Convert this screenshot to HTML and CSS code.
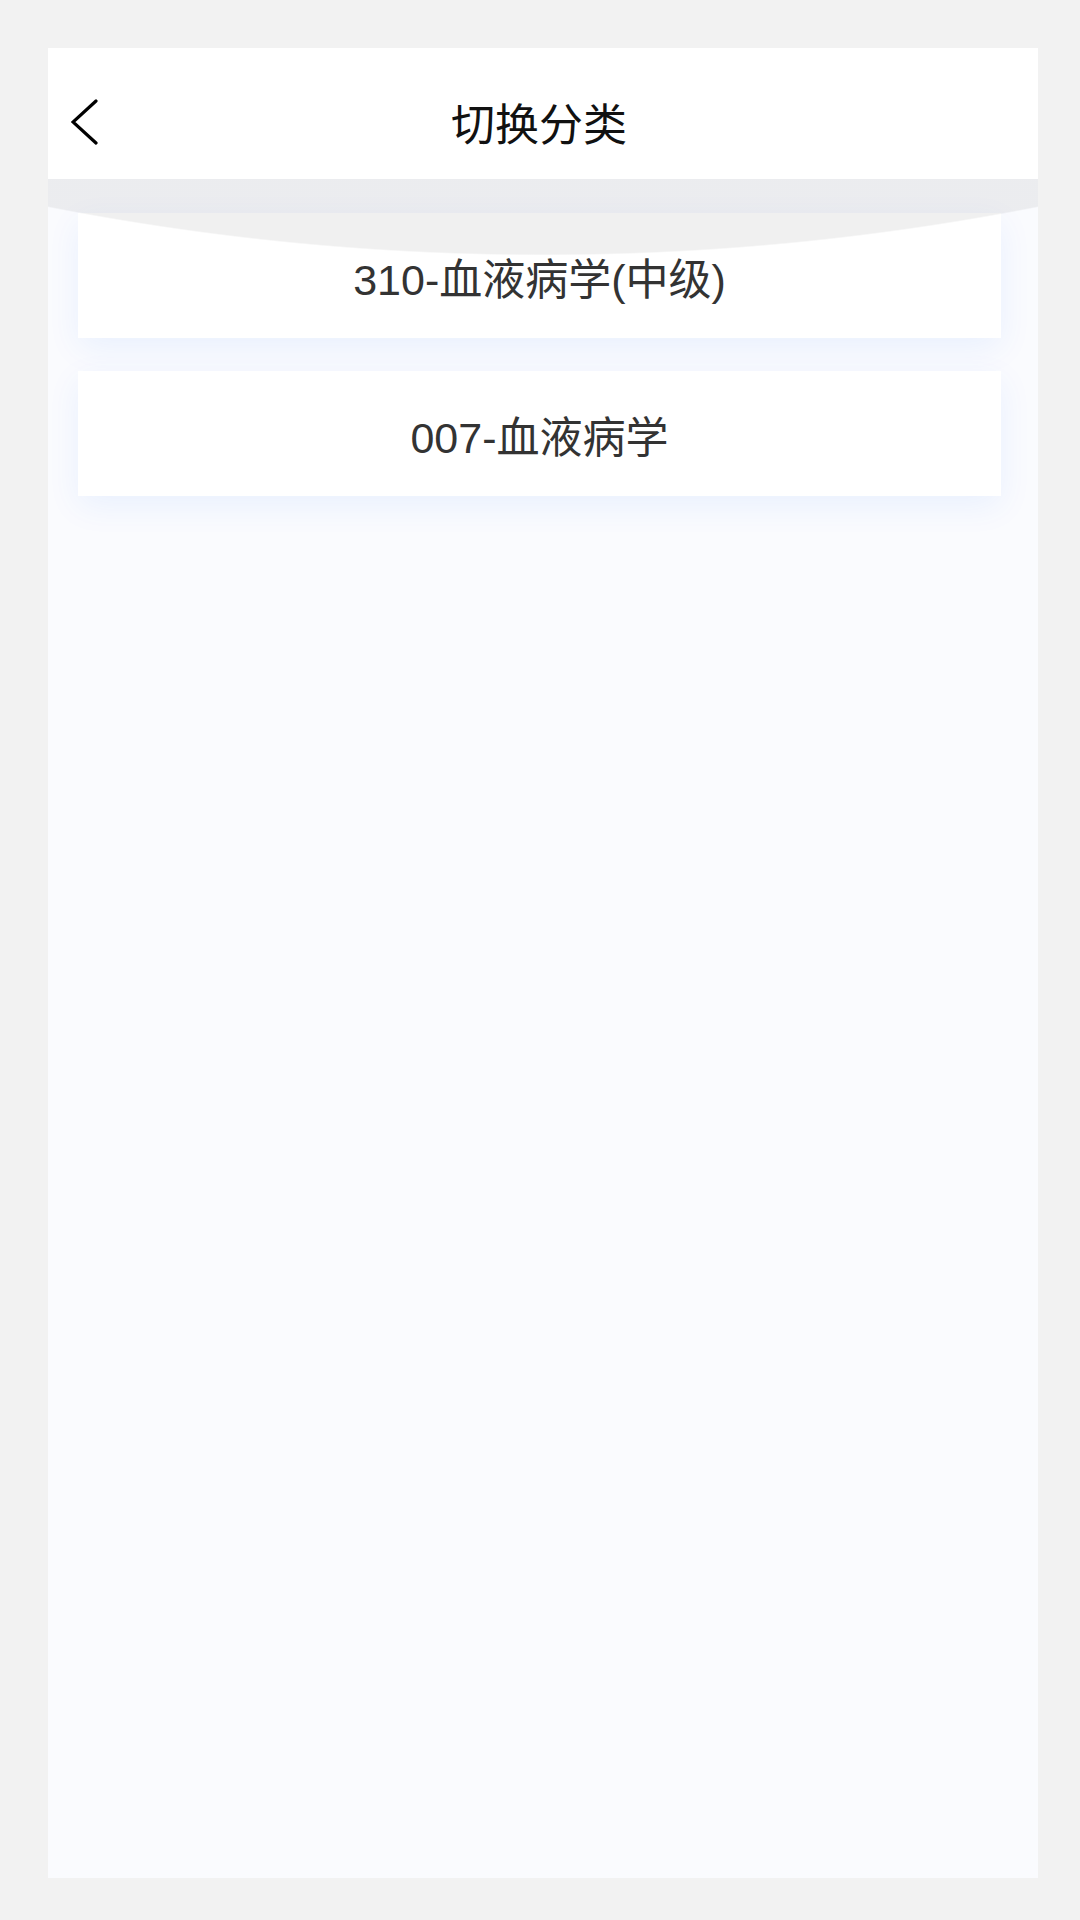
FILE: index.html
```html
<!DOCTYPE html>
<html lang="zh">
<head>
  <meta charset="UTF-8">
  <title>切换分类</title>
  <link rel="stylesheet" href="styles.css">
</head>
<body>

  <div class="page">
    <div class="nav-bar">
      <div class="back-btn">
        <svg width="28" height="46" viewBox="0 0 28 46">
          <path d="M25 2 L2 23 L25 44" fill="none" stroke="#000" stroke-width="3.2" stroke-linecap="round" stroke-linejoin="miter"/>
        </svg>
      </div>
      <div class="nav-title">切换分类</div>
      <div></div>
    </div>

    <div class="content">
      <div class="overscroll-glow"></div>
      <div class="cate-list">
        <div class="cate-item">310-血液病学(中级)</div>
        <div class="cate-item">007-血液病学</div>
      </div>
    </div>
  </div>

</body>
</html>
```

FILE: styles.css
```css
html, body {
  margin: 0;
  padding: 0;
}

body {
  background-color: #f2f2f2;
  font-family: "Liberation Sans", "Noto Sans CJK SC", sans-serif;
  padding: 48px 42px 42px 48px;
}

.page {
  width: 990px;
  height: 1830px;
  background-color: #fafbfe;
  display: flex;
  flex-direction: column;
  overflow: hidden;
}

.nav-bar {
  display: grid;
  grid-template-columns: 112px 1fr 120px;
  align-items: center;
  height: 115px;
  padding-top: 16px;
  background-color: #fff;
}

.back-btn {
  padding-left: 23px;
  display: flex;
  align-items: center;
}

.back-btn svg {
  display: block;
}

.nav-title {
  text-align: center;
  font-family: "Noto Sans CJK SC", sans-serif;
  font-size: 44px;
  color: #111;
  line-height: 1;
}

.content {
  position: relative;
  flex: 1;
}

/* android overscroll edge glow */
.overscroll-glow {
  position: absolute;
  top: 0;
  left: 0;
  right: 0;
  height: 76px;
  background: radial-gradient(circle 2578px at 50% -2502px, rgba(0, 0, 0, 0.06) 2577px, rgba(0, 0, 0, 0) 2578.5px);
  z-index: 2;
}

.cate-list {
  display: flex;
  flex-direction: column;
  gap: 33px;
  padding: 34px 37px 0 30px;
}

.cate-item {
  height: 125px;
  display: flex;
  align-items: center;
  justify-content: center;
  background-color: #fff;
  box-shadow: 0 10px 32px rgba(0, 102, 255, 0.07);
  font-size: 43px;
  color: #333;
}
```
